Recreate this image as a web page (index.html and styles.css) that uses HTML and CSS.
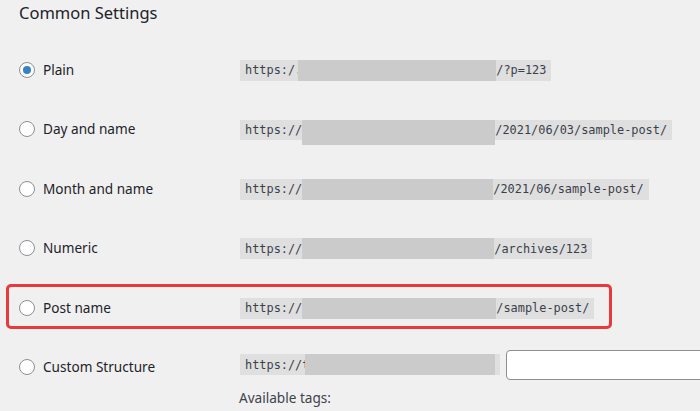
FILE: index.html
```html
<!DOCTYPE html>
<html>
<head>
<meta charset="utf-8">
<link rel="stylesheet" href="styles.css">
</head>
<body>
<div class="wrap">
  <h2 class="title">Common Settings</h2>
  <div class="row">
    <label class="choice"><span class="radio checked"></span>Plain</label>
    <div class="value"><code>https:/.<span class="blur overlap" style="width:198px"></span>/?p=123</code></div>
  </div>
  <div class="row">
    <label class="choice"><span class="radio"></span>Day and name</label>
    <div class="value"><code>https://<span class="blur tall" style="width:193px"></span>/2021/06/03/sample-post/</code></div>
  </div>
  <div class="row">
    <label class="choice"><span class="radio"></span>Month and name</label>
    <div class="value"><code>https://<span class="blur" style="width:191px"></span>/2021/06/sample-post/</code></div>
  </div>
  <div class="row">
    <label class="choice"><span class="radio"></span>Numeric</label>
    <div class="value"><code>https://<span class="blur" style="width:192px"></span>/archives/123</code></div>
  </div>
  <div class="row highlighted">
    <label class="choice"><span class="radio"></span>Post name</label>
    <div class="value"><code>https://<span class="blur" style="width:194px"></span>/sample-post/</code></div>
  </div>
  <div class="row custom">
    <label class="choice"><span class="radio"></span>Custom Structure</label>
    <div class="value">
      <div class="custom-line">
        <code>https://t<span class="blur overlap" style="width:190px"></span></code>
        <input class="structure" type="text">
      </div>
      <p class="tags">Available tags:</p>
    </div>
  </div>
</div>
</body>
</html>
```

FILE: styles.css
```css
html, body {
  margin: 0;
  padding: 0;
  background: #f0f0f1;
}
body {
  font-family: "Segoe UI", "Noto Sans", "Liberation Sans", sans-serif;
  color: #1d2327;
  font-size: 13.6px;
  overflow: hidden;
}
.wrap {
  padding-left: 19px;
}
.title {
  font-size: 16.5px;
  font-weight: 400;
  line-height: 22px;
  margin: 0;
  padding-top: 2px;
  height: 38px;
  color: #1d2327;
}
.row {
  display: flex;
  align-items: center;
  height: 59.5px;
  position: relative;
}
.choice {
  width: 221px;
  flex: none;
  display: flex;
  align-items: center;
  gap: 8px;
  line-height: 20px;
}
.radio {
  width: 16px;
  height: 16px;
  box-sizing: border-box;
  border: 1px solid #8c8f94;
  border-radius: 50%;
  background: #fff;
  display: flex;
  align-items: center;
  justify-content: center;
  flex: none;
}
.radio.checked::after {
  content: "";
  width: 8px;
  height: 8px;
  border-radius: 50%;
  background: #3582c4;
}
code {
  font-family: "DejaVu Sans Mono", "Liberation Mono", monospace;
  font-size: 11.9px;
  line-height: 15px;
  color: #3a3f4a;
  background: rgba(0, 0, 0, 0.07);
  padding: 3px 5px 2px;
  display: inline-flex;
  align-items: center;
  white-space: nowrap;
}
.blur {
  display: inline-block;
  height: 21px;
  margin: -3px 0 -2px;
  background: #cbcbcb;
}
.blur.overlap {
  margin-left: -4px;
}
.blur.tall {
  height: 25px;
  margin-bottom: -7px;
  align-self: flex-start;
}
.highlighted::before {
  content: "";
  position: absolute;
  left: -13px;
  top: 6px;
  width: 606px;
  height: 45px;
  box-sizing: border-box;
  border: 3px solid #e8393c;
  border-radius: 5px;
}
.row.custom {
  align-items: flex-start;
  height: auto;
  padding-top: 12px;
}
.custom .choice {
  margin-top: 7px;
}
.custom-line {
  display: flex;
  align-items: center;
  gap: 6px;
}
.structure {
  width: 220px;
  height: 30px;
  box-sizing: border-box;
  border: 1px solid #8c8f94;
  border-radius: 4px;
  background: #fff;
  margin: 0;
  padding: 0 8px;
}
.tags {
  margin: 8px 0 0 -1px;
  color: #3c434a;
  font-size: 13.6px;
  line-height: 20px;
}
```
